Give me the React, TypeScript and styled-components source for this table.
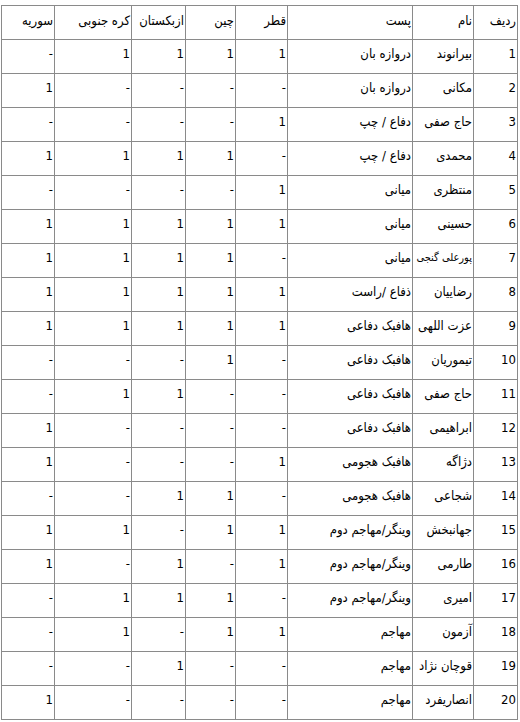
import React from "react";
import styled, { createGlobalStyle } from "styled-components";

type Mark = 0 | 1;

interface PlayerRow {
  name: string;
  post: string;
  // قطر، چین، ازبکستان، کره جنوبی، سوریه
  games: [Mark, Mark, Mark, Mark, Mark];
}

const GlobalStyle = createGlobalStyle`
  html, body {
    margin: 0;
    padding: 0;
    background: #ffffff;
  }
`;

const Page = styled.div`
  padding: 5px 3px 0 1px;
`;

const Table = styled.table`
  direction: rtl;
  width: 516px;
  table-layout: fixed;
  border-collapse: collapse;
  border: 1px solid #3a3a3a;
  font-family: "DejaVu Sans Condensed", "DejaVu Sans", sans-serif;
  font-size: 13px;
  color: #000;
`;

const Row = styled.tr`
  height: 34px;
`;

const Cell = styled.td<{ $head?: boolean; $small?: boolean }>`
  border: 1px solid #8a8a8a;
  padding: 0 1px;
  padding-bottom: ${({ $head }) => ($head ? "4px" : "6px")};
  text-align: right;
  vertical-align: middle;
  white-space: nowrap;
  overflow: hidden;
  line-height: 15px;
  font-weight: 400;
  font-size: ${({ $small }) => ($small ? "11px" : "13px")};
`;

const columns = [
  { title: "ردیف", width: 44 },
  { title: "نام", width: 61 },
  { title: "پست", width: 125 },
  { title: "قطر", width: 52 },
  { title: "چین", width: 50 },
  { title: "ازبکستان", width: 54 },
  { title: "کره جنوبی", width: 77 },
  { title: "سوریه", width: 53 },
];

const players: PlayerRow[] = [
  { name: "بیرانوند", post: "دروازه بان", games: [1, 1, 1, 1, 0] },
  { name: "مکانی", post: "دروازه بان", games: [0, 0, 0, 0, 1] },
  { name: "حاج صفی", post: "دفاع / چپ", games: [1, 0, 0, 0, 0] },
  { name: "محمدی", post: "دفاع / چپ", games: [0, 1, 1, 1, 1] },
  { name: "منتظری", post: "میانی", games: [1, 0, 0, 0, 0] },
  { name: "حسینی", post: "میانی", games: [1, 1, 1, 1, 1] },
  { name: "پورعلی گنجی", post: "میانی", games: [0, 1, 1, 1, 1] },
  { name: "رضاییان", post: "ذفاع /راست", games: [1, 1, 1, 1, 1] },
  { name: "عزت اللهی", post: "هافبک دفاعی", games: [1, 1, 1, 1, 1] },
  { name: "تیموریان", post: "هافبک دفاعی", games: [0, 1, 0, 0, 0] },
  { name: "حاج صفی", post: "هافبک دفاعی", games: [0, 0, 1, 1, 0] },
  { name: "ابراهیمی", post: "هافبک دفاعی", games: [0, 0, 0, 0, 1] },
  { name: "دژاگه", post: "هافبک هجومی", games: [1, 0, 0, 0, 1] },
  { name: "شجاعی", post: "هافبک هجومی", games: [0, 1, 1, 0, 0] },
  { name: "جهانبخش", post: "وینگر/مهاجم دوم", games: [1, 1, 0, 1, 1] },
  { name: "طارمی", post: "وینگر/مهاجم دوم", games: [1, 0, 1, 0, 1] },
  { name: "امیری", post: "وینگر/مهاجم دوم", games: [0, 1, 1, 1, 0] },
  { name: "آزمون", post: "مهاجم", games: [1, 1, 0, 1, 0] },
  { name: "قوچان نژاد", post: "مهاجم", games: [0, 0, 1, 0, 0] },
  { name: "انصاریفرد", post: "مهاجم", games: [0, 0, 0, 0, 1] },
];

const App: React.FC = () => {
  return (
    <Page>
      <GlobalStyle />
      <Table>
        <colgroup>
          {columns.map((col) => (
            <col key={col.title} style={{ width: col.width }} />
          ))}
        </colgroup>
        <thead>
          <Row>
            {columns.map((col) => (
              <Cell as="th" $head key={col.title}>
                {col.title}
              </Cell>
            ))}
          </Row>
        </thead>
        <tbody>
          {players.map((p, i) => (
            <Row key={i}>
              <Cell>{i + 1}</Cell>
              <Cell $small={p.name.length > 10}>{p.name}</Cell>
              <Cell>{p.post}</Cell>
              {p.games.map((g, j) => (
                <Cell key={j}>{g ? "1" : "-"}</Cell>
              ))}
            </Row>
          ))}
        </tbody>
      </Table>
    </Page>
  );
};

export default App;
